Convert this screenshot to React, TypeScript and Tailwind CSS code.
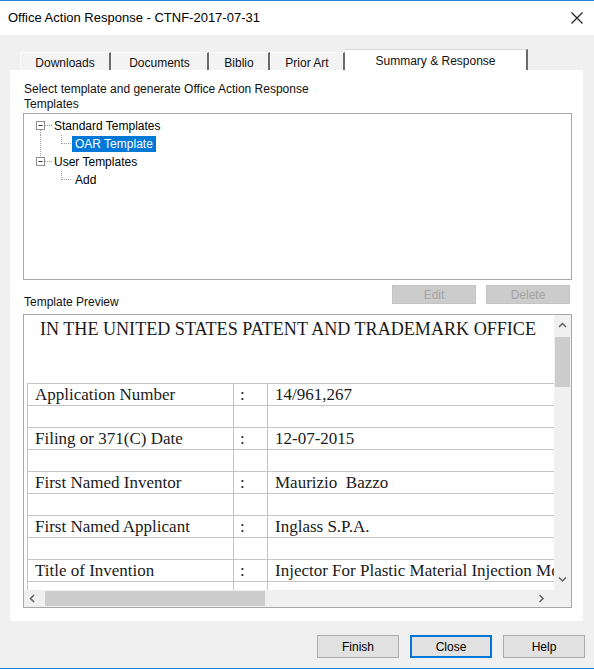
import React from "react";

const rows = [
  { label: "Application Number", value: "14/961,267" },
  { label: "Filing or 371(C) Date", value: "12-07-2015" },
  { label: "First Named Inventor", value: "Maurizio  Bazzo" },
  { label: "First Named Applicant", value: "Inglass S.P.A." },
  { label: "Title of Invention", value: "Injector For Plastic Material Injection Moulding Apparatus" },
];

const tabs = [
  { name: "Downloads", w: "w-[91px]" },
  { name: "Documents", w: "w-[98px]" },
  { name: "Biblio", w: "w-[61px]" },
  { name: "Prior Art", w: "w-[75px]" },
];

function Chevron({ dir }: { dir: "up" | "down" | "left" | "right" }) {
  const d = {
    up: "M1 5 L4.5 1.5 L8 5",
    down: "M1 1.5 L4.5 5 L8 1.5",
    left: "M5 1 L1.5 4.5 L5 8",
    right: "M1.5 1 L5 4.5 L1.5 8",
  }[dir];
  const vertical = dir === "up" || dir === "down";
  return (
    <svg width={vertical ? 9 : 7} height={vertical ? 7 : 9} viewBox={vertical ? "0 0 9 7" : "0 0 7 9"}>
      <path d={d} fill="none" stroke="#606060" strokeWidth="1.5" />
    </svg>
  );
}

function MinusBox() {
  return (
    <>
      <rect x="12.5" y="4.5" width="8" height="8" fill="white" stroke="#8e8e8e" />
      <line x1="14.5" y1="8.5" x2="18.5" y2="8.5" stroke="#333" />
      <line x1="21" y1="8.5" x2="28" y2="8.5" stroke="#9a9a9a" strokeDasharray="1 1" />
    </>
  );
}

function TreeRoot({ label, below, above }: { label: string; below?: boolean; above?: boolean }) {
  return (
    <div className="flex h-[18px] items-center">
      <svg width="29" height="18" viewBox="0 0 29 18" className="shrink-0">
        {above && <line x1="16.5" y1="0" x2="16.5" y2="4" stroke="#9a9a9a" strokeDasharray="1 1" />}
        {below && <line x1="16.5" y1="13" x2="16.5" y2="18" stroke="#9a9a9a" strokeDasharray="1 1" />}
        <MinusBox />
      </svg>
      <span className="px-[1px] leading-[16px]">{label}</span>
    </div>
  );
}

function TreeLeaf({ label, selected, sibling }: { label: string; selected?: boolean; sibling?: boolean }) {
  return (
    <div className="flex h-[18px] items-center">
      <svg width="48" height="18" viewBox="0 0 48 18" className="shrink-0">
        {sibling && <line x1="16.5" y1="0" x2="16.5" y2="18" stroke="#9a9a9a" strokeDasharray="1 1" />}
        <line x1="37.5" y1="0" x2="37.5" y2="9" stroke="#9a9a9a" strokeDasharray="1 1" />
        <line x1="38" y1="8.5" x2="47" y2="8.5" stroke="#9a9a9a" strokeDasharray="1 1" />
      </svg>
      <span
        className={`h-[16px] px-[3px] leading-[16px] ${
          selected ? "bg-[#0078d7] text-white" : "text-black"
        }`}
      >
        {label}
      </span>
    </div>
  );
}

export default function App() {
  return (
    <div className="flex h-[669px] w-[594px] flex-col overflow-hidden border-b border-[#2a7fd4] bg-[#f0f0f0] font-['Liberation_Sans',Arial,sans-serif] text-[12px] text-[#111]">
      {/* Title bar */}
      <div className="flex h-[35px] shrink-0 items-center justify-between border-t border-[#2a7fd4] bg-white pl-[8px] pr-[11px]">
        <span className="text-[13px] text-black">Office Action Response - CTNF-2017-07-31</span>
        <svg width="12" height="12" viewBox="0 0 12 12">
          <path d="M0.5 0.5 L11.5 11.5 M11.5 0.5 L0.5 11.5" stroke="#222" strokeWidth="1.2" />
        </svg>
      </div>

      {/* Tabs */}
      <div className="ml-[20px] mt-[14px] flex h-[21px] shrink-0 items-end">
        {tabs.map((t) => (
          <div
            key={t.name}
            className={`${t.w} flex h-[18px] items-center justify-center border-l border-t border-l-[#fafafa] border-t-[#fafafa] border-r-2 border-r-[#6a6a6a] bg-[#f3f3f3] pt-[3px]`}
          >
            {t.name}
          </div>
        ))}
        <div className="flex h-[21px] w-[183px] items-center justify-center border-t border-r-2 border-t-[#d9d9d9] border-r-[#6a6a6a] bg-white pt-[1px]">
          Summary &amp; Response
        </div>
      </div>

      {/* Tab panel */}
      <div className="mx-[10px] flex h-[551px] w-[573px] shrink-0 flex-col bg-white pl-[13px] pr-[11px] pt-[12px]">
        <div className="pl-[1px] leading-[15px]">
          Select template and generate Office Action Response
          <br />
          Templates
        </div>

        <div className="mt-[1px] h-[167px] border border-[#a8a8a8] pt-[3px] text-black">
          <TreeRoot label="Standard Templates" below />
          <TreeLeaf label="OAR Template" selected sibling />
          <TreeRoot label="User Templates" above />
          <TreeLeaf label="Add" />
        </div>

        <div className="flex h-[34px] justify-between pr-[2px]">
          <span className="self-end pb-[4px] pl-[1px] leading-[15px]">Template Preview</span>
          <div className="mt-[5px] flex gap-[10px]">
            <button className="h-[19px] w-[84px] border border-[#c4c4c4] bg-[#cccccc] text-[12px] text-[#a3a3a3]">
              Edit
            </button>
            <button className="h-[19px] w-[84px] border border-[#c4c4c4] bg-[#cccccc] text-[12px] text-[#a3a3a3]">
              Delete
            </button>
          </div>
        </div>

        {/* Preview */}
        <div className="flex h-[294px] flex-col border border-[#a8a8a8]">
          <div className="flex h-[275px]">
            <div className="flex-1 overflow-hidden font-['Liberation_Serif','Times_New_Roman',serif] text-[#1a1a1a]">
              <div className="whitespace-nowrap pl-[16px] pt-[4px] text-[18.1px] leading-[20px]">
                IN THE UNITED STATES PATENT AND TRADEMARK OFFICE
              </div>
              <div className="ml-[3px] mt-[44px] w-[600px] border-l border-t border-[#c4c4c4] text-[17px]">
                {rows.map((r) => (
                  <React.Fragment key={r.label}>
                    <div className="flex h-[22px] border-b border-[#c4c4c4]">
                      <div className="w-[206px] shrink-0 border-r border-[#c4c4c4] pl-[7px] leading-[21px]">{r.label}</div>
                      <div className="w-[34px] shrink-0 border-r border-[#c4c4c4] pl-[6px] leading-[21px]">:</div>
                      <div className="w-[360px] shrink-0 overflow-hidden whitespace-pre pl-[7px] leading-[21px]">{r.value}</div>
                    </div>
                    <div className="flex h-[22px] border-b border-[#c4c4c4]">
                      <div className="w-[206px] shrink-0 border-r border-[#c4c4c4]" />
                      <div className="w-[34px] shrink-0 border-r border-[#c4c4c4]" />
                      <div className="flex-1" />
                    </div>
                  </React.Fragment>
                ))}
              </div>
            </div>
            <div className="flex w-[17px] flex-col bg-[#f0f0f0]">
              <div className="flex h-[21px] items-center justify-center">
                <Chevron dir="up" />
              </div>
              <div className="mx-[1px] mt-[1px] h-[50px] bg-[#cdcdcd]" />
              <div className="flex-1" />
              <div className="flex h-[21px] items-center justify-center">
                <Chevron dir="down" />
              </div>
            </div>
          </div>
          <div className="flex h-[17px] bg-[#f0f0f0]">
            <div className="flex w-[17px] items-center justify-center">
              <Chevron dir="left" />
            </div>
            <div className="my-[1px] ml-[4px] w-[220px] bg-[#cdcdcd]" />
            <div className="flex-1" />
            <div className="flex w-[26px] items-center justify-center">
              <Chevron dir="right" />
            </div>
            <div className="w-[17px]" />
          </div>
        </div>
      </div>

      {/* Dialog buttons */}
      <div className="mt-[14px] flex justify-end gap-[11px] pr-[9px]">
        <button className="h-[23px] w-[82px] border border-[#adadad] bg-[#e1e1e1] text-[12px] text-black">Finish</button>
        <button className="h-[23px] w-[82px] border-2 border-[#0078d7] bg-[#e1e1e1] text-[12px] text-black">Close</button>
        <button className="h-[23px] w-[82px] border border-[#adadad] bg-[#e1e1e1] text-[12px] text-black">Help</button>
      </div>
    </div>
  );
}
